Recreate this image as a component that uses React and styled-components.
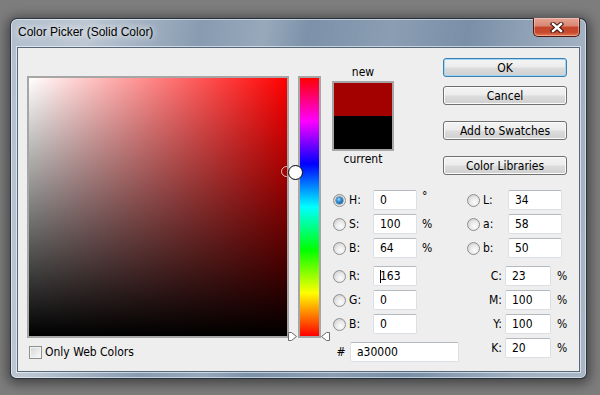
import React from 'react';
import styled, { createGlobalStyle, css } from 'styled-components';

const GlobalStyle = createGlobalStyle`
  html, body { margin: 0; padding: 0; }
  body {
    width: 600px;
    height: 395px;
    overflow: hidden;
    background: #7d7d7d;
    font-family: "DejaVu Sans Condensed", "DejaVu Sans", sans-serif;
    font-size: 12px;
    color: #000;
  }
`;

const Desktop = styled.div`
  padding: 18px 0 0 10px;
`;

const Window = styled.div`
  width: 577px;
  height: 361px;
  box-sizing: border-box;
  display: flex;
  flex-direction: column;
  padding: 0 6px 6px;
  border: 1px solid rgba(28, 38, 50, 0.9);
  border-radius: 7px 7px 6px 6px;
  background:
    linear-gradient(100deg,
      rgba(255,255,255,0.42) 0%,
      rgba(255,255,255,0.5) 12%,
      rgba(255,255,255,0.1) 30%,
      rgba(255,255,255,0.22) 40%,
      rgba(255,255,255,0.02) 47%,
      rgba(255,255,255,0.12) 60%,
      rgba(255,255,255,0) 72%,
      rgba(255,255,255,0.3) 90%,
      rgba(255,255,255,0.35) 100%),
    #7a90a8;
  box-shadow: 0 2px 12px 3px rgba(0, 0, 0, 0.45), inset 0 0 0 1px rgba(255, 255, 255, 0.5);
`;

const TitleBar = styled.div`
  height: 28px;
  flex: none;
  display: flex;
  align-items: flex-start;
  justify-content: space-between;
`;

const Title = styled.div`
  margin-left: 1px;
  line-height: 27px;
  font-family: "Liberation Sans", Arial, sans-serif;
  font-size: 12px;
  color: #000;
  text-shadow: 0 0 6px rgba(255,255,255,0.95), 0 0 10px rgba(255,255,255,0.8);
`;

const CloseButton = styled.div`
  width: 47px;
  height: 19px;
  margin-top: -1px;
  box-sizing: border-box;
  display: flex;
  align-items: center;
  justify-content: center;
  border: 1px solid #4d1a12;
  border-top: none;
  border-radius: 0 0 5px 5px;
  background: linear-gradient(#e6a595 0%, #d98672 45%, #c2452d 50%, #c84a2e 80%, #e07a55 100%);
  box-shadow: inset 0 0 0 1px rgba(255, 220, 210, 0.45);
`;

const Client = styled.div`
  flex: 1;
  display: flex;
  align-items: flex-start;
  padding: 10px 0 0 9px;
  background: #eeeeee;
  border: 1px solid #56687c;
  box-shadow: 0 0 0 1px rgba(255, 255, 255, 0.55);
`;

const LeftCol = styled.div`
  margin-top: 18px;
  display: flex;
  flex-direction: column;
`;

const ColorField = styled.div`
  position: relative;
  width: 262px;
  height: 262px;
  box-sizing: border-box;
  border: 2px solid #a6a6a6;
`;

const FieldInner = styled.div`
  position: relative;
  width: 100%;
  height: 100%;
  overflow: hidden;
  background:
    linear-gradient(to top, #000 0%, rgba(0,0,0,0) 100%),
    linear-gradient(to right, #fff 0%, #ff0000 100%);
`;

const FieldMarker = styled.div`
  position: absolute;
  left: 252px;
  top: 88px;
  width: 11px;
  height: 11px;
  box-sizing: border-box;
  border-radius: 50%;
  border: 1px solid rgba(255, 255, 255, 0.75);
  box-shadow: 0 0 0 1px rgba(120, 0, 0, 0.5);
`;

const Cursor = styled.div`
  position: absolute;
  left: 259px;
  top: 87px;
  width: 15px;
  height: 15px;
  box-sizing: border-box;
  border-radius: 50%;
  border: 1px solid #000;
  background: #fff;
  z-index: 2;
`;

const CheckRow = styled.div`
  margin-top: 7px;
  height: 14px;
  display: flex;
  align-items: center;
`;

const CheckBox = styled.span`
  width: 13px;
  height: 13px;
  margin-left: 2px;
  box-sizing: border-box;
  border: 1px solid #8e8f8f;
  background: linear-gradient(135deg, #d4d4d4 0%, #ececec 60%, #f8f8f8 100%);
  box-shadow: inset 0 0 0 1px #f4f4f4;
`;

const CheckLabel = styled.span`
  margin-left: 3px;
`;

const HueSlider = styled.div`
  position: relative;
  margin: 18px 0 0 9px;
  width: 23px;
  height: 262px;
  box-sizing: border-box;
  border: 2px solid #a6a6a6;
  background: linear-gradient(to bottom,
    #ff0000 0%, #ff00ff 16.67%, #0000ff 33.33%, #00ffff 50%,
    #00ff00 66.67%, #ffff00 83.33%, #ff0000 100%);
`;

const Arrow = styled.svg`
  position: absolute;
  bottom: -5px;
  ${p => (p.$side === 'left' ? css`left: -12px;` : css`right: -11px;`)}
`;

const RightArea = styled.div`
  margin-left: 11px;
  display: flex;
  flex-direction: column;
`;

const TopRow = styled.div`
  display: flex;
  align-items: flex-start;
`;

const Preview = styled.div`
  width: 62px;
  display: flex;
  flex-direction: column;
  align-items: center;
`;

const PreviewLabel = styled.div`
  height: 14px;
  line-height: 14px;
  margin-top: ${p => p.$top}px;
`;

const Swatch = styled.div`
  width: 62px;
  margin-top: 2px;
  box-sizing: border-box;
  border: 2px solid #a6a6a6;
  display: flex;
  flex-direction: column;
`;

const SwatchHalf = styled.div`
  height: 33px;
  background: ${p => p.$color};
`;

const ButtonCol = styled.div`
  margin-left: 49px;
  width: 124px;
  display: flex;
  flex-direction: column;
`;

const Button = styled.div`
  height: 19px;
  margin-top: ${p => p.$gap}px;
  box-sizing: border-box;
  display: flex;
  align-items: center;
  justify-content: center;
  border: 1px solid ${p => (p.$default ? '#3c7fb1' : '#707070')};
  border-radius: 3px;
  background: linear-gradient(#f4f4f4 0%, #ececec 48%, #dddddd 52%, #cfcfcf 100%);
  box-shadow: inset 0 0 0 1px ${p => (p.$default ? '#9fd6f5' : '#fbfbfb')};
`;

const Fields = styled.div`
  margin-top: 15px;
  display: flex;
  align-items: flex-start;
`;

const FieldCol = styled.div`
  width: ${p => p.$width}px;
  display: flex;
  flex-direction: column;
`;

const Group = styled.div`
  margin-top: ${p => p.$gap || 0}px;
`;

const Row = styled.div`
  height: 20px;
  margin-bottom: 4px;
  display: flex;
  align-items: center;
`;

const Radio = styled.span`
  position: relative;
  flex: none;
  width: 13px;
  height: 13px;
  margin-left: 1px;
  box-sizing: border-box;
  border-radius: 50%;
  border: 1px solid #8e8f8f;
  background: radial-gradient(circle at 60% 65%, #fbfbfb 0%, #ececec 40%, #c4c4c4 100%);
  ${p => p.$checked && css`
    &::after {
      content: '';
      position: absolute;
      left: 2px;
      top: 2px;
      width: 7px;
      height: 7px;
      border-radius: 50%;
      background: radial-gradient(circle at 40% 35%, #9fe0ff 0%, #3592d6 35%, #0b4a80 100%);
      box-shadow: 0 0 0 0.5px #2b5f8c;
    }
  `}
`;

const Label = styled.span`
  flex: none;
  width: ${p => p.$width}px;
  margin-left: ${p => p.$offset || 0}px;
  text-align: ${p => p.$align || 'left'};
`;

const TextBox = styled.div`
  flex: none;
  width: ${p => p.$width}px;
  height: 20px;
  margin-left: ${p => p.$offset || 0}px;
  box-sizing: border-box;
  padding-left: 6px;
  display: flex;
  align-items: center;
  background: #fff;
  border: 1px solid #dbdfe6;
  border-top-color: #b5b9c0;
  border-radius: 2px;
`;

const Caret = styled.span`
  width: 1px;
  height: 13px;
  background: #000;
  margin-right: -1px;
`;

const Unit = styled.span`
  margin-left: ${p => p.$offset}px;
  ${p => p.$raise && css`
    position: relative;
    top: -4px;
  `}
`;

const HashRow = styled.div`
  margin-top: 4px;
  height: 20px;
  display: flex;
  align-items: center;
`;

function Glyph({ side }) {
  const d = side === 'left'
    ? 'M0.5 0.5 H3.5 L8.5 4.5 L3.5 8.5 H0.5 Z'
    : 'M8.5 0.5 H5.5 L0.5 4.5 L5.5 8.5 H8.5 Z';
  return (
    <Arrow $side={side} width="9" height="9" viewBox="0 0 9 9">
      <path d={d} fill="#fff" stroke="#6a6a6a" strokeWidth="1" />
    </Arrow>
  );
}

const hsb = [
  { key: 'H', value: '0', unit: '°', checked: true },
  { key: 'S', value: '100', unit: '%' },
  { key: 'B', value: '64', unit: '%' },
];

const rgb = [
  { key: 'R', value: '163', caret: true },
  { key: 'G', value: '0' },
  { key: 'B', value: '0' },
];

const lab = [
  { key: 'L', value: '34' },
  { key: 'a', value: '58' },
  { key: 'b', value: '50' },
];

const cmyk = [
  { key: 'C', value: '23' },
  { key: 'M', value: '100' },
  { key: 'Y', value: '100' },
  { key: 'K', value: '20' },
];

export default function App() {
  return (
    <>
      <GlobalStyle />
      <Desktop>
        <Window>
          <TitleBar>
            <Title>Color Picker (Solid Color)</Title>
            <CloseButton>
              <svg width="14" height="11" viewBox="0 0 14 11">
                <path d="M3 2 L11 9 M11 2 L3 9" stroke="#3b120c" strokeWidth="4.4" strokeLinecap="square" />
                <path d="M3 2 L11 9 M11 2 L3 9" stroke="#ffffff" strokeWidth="2.4" strokeLinecap="square" />
              </svg>
            </CloseButton>
          </TitleBar>
          <Client>
            <LeftCol>
              <ColorField>
                <FieldInner>
                  <FieldMarker />
                </FieldInner>
                <Cursor />
              </ColorField>
              <CheckRow>
                <CheckBox />
                <CheckLabel>Only Web Colors</CheckLabel>
              </CheckRow>
            </LeftCol>
            <HueSlider>
              <Glyph side="left" />
              <Glyph side="right" />
            </HueSlider>
            <RightArea>
              <TopRow>
                <Preview>
                  <PreviewLabel $top={7}>new</PreviewLabel>
                  <Swatch>
                    <SwatchHalf $color="#a30000" />
                    <SwatchHalf $color="#000000" />
                  </Swatch>
                  <PreviewLabel $top={1}>current</PreviewLabel>
                </Preview>
                <ButtonCol>
                  <Button $default $gap={0}>OK</Button>
                  <Button $gap={9}>Cancel</Button>
                  <Button $gap={16}>Add to Swatches</Button>
                  <Button $gap={16}>Color Libraries</Button>
                </ButtonCol>
              </TopRow>
              <Fields>
                <FieldCol $width={134}>
                  <Group>
                    {hsb.map(f => (
                      <Row key={f.key}>
                        <Radio $checked={f.checked} />
                        <Label $width={24} $offset={3}>{f.key}:</Label>
                        <TextBox $width={44}>{f.value}</TextBox>
                        <Unit $offset={5} $raise={f.unit === '°'}>{f.unit}</Unit>
                      </Row>
                    ))}
                  </Group>
                  <Group $gap={4}>
                    {rgb.map(f => (
                      <Row key={f.key}>
                        <Radio />
                        <Label $width={24} $offset={3}>{f.key}:</Label>
                        <TextBox $width={44}>
                          {f.caret && <Caret />}
                          {f.value}
                        </TextBox>
                      </Row>
                    ))}
                  </Group>
                  <HashRow>
                    <Label $width={18} $align="center">#</Label>
                    <TextBox $width={109}>a30000</TextBox>
                  </HashRow>
                </FieldCol>
                <FieldCol>
                  <Group>
                    {lab.map(f => (
                      <Row key={f.key}>
                        <Radio />
                        <Label $width={25} $offset={3}>{f.key}:</Label>
                        <TextBox $width={54}>{f.value}</TextBox>
                      </Row>
                    ))}
                  </Group>
                  <Group $gap={4}>
                    {cmyk.map(f => (
                      <Row key={f.key}>
                        <Label $width={36} $align="right">{f.key}:</Label>
                        <TextBox $width={46} $offset={3}>{f.value}</TextBox>
                        <Unit $offset={6}>%</Unit>
                      </Row>
                    ))}
                  </Group>
                </FieldCol>
              </Fields>
            </RightArea>
          </Client>
        </Window>
      </Desktop>
    </>
  );
}
